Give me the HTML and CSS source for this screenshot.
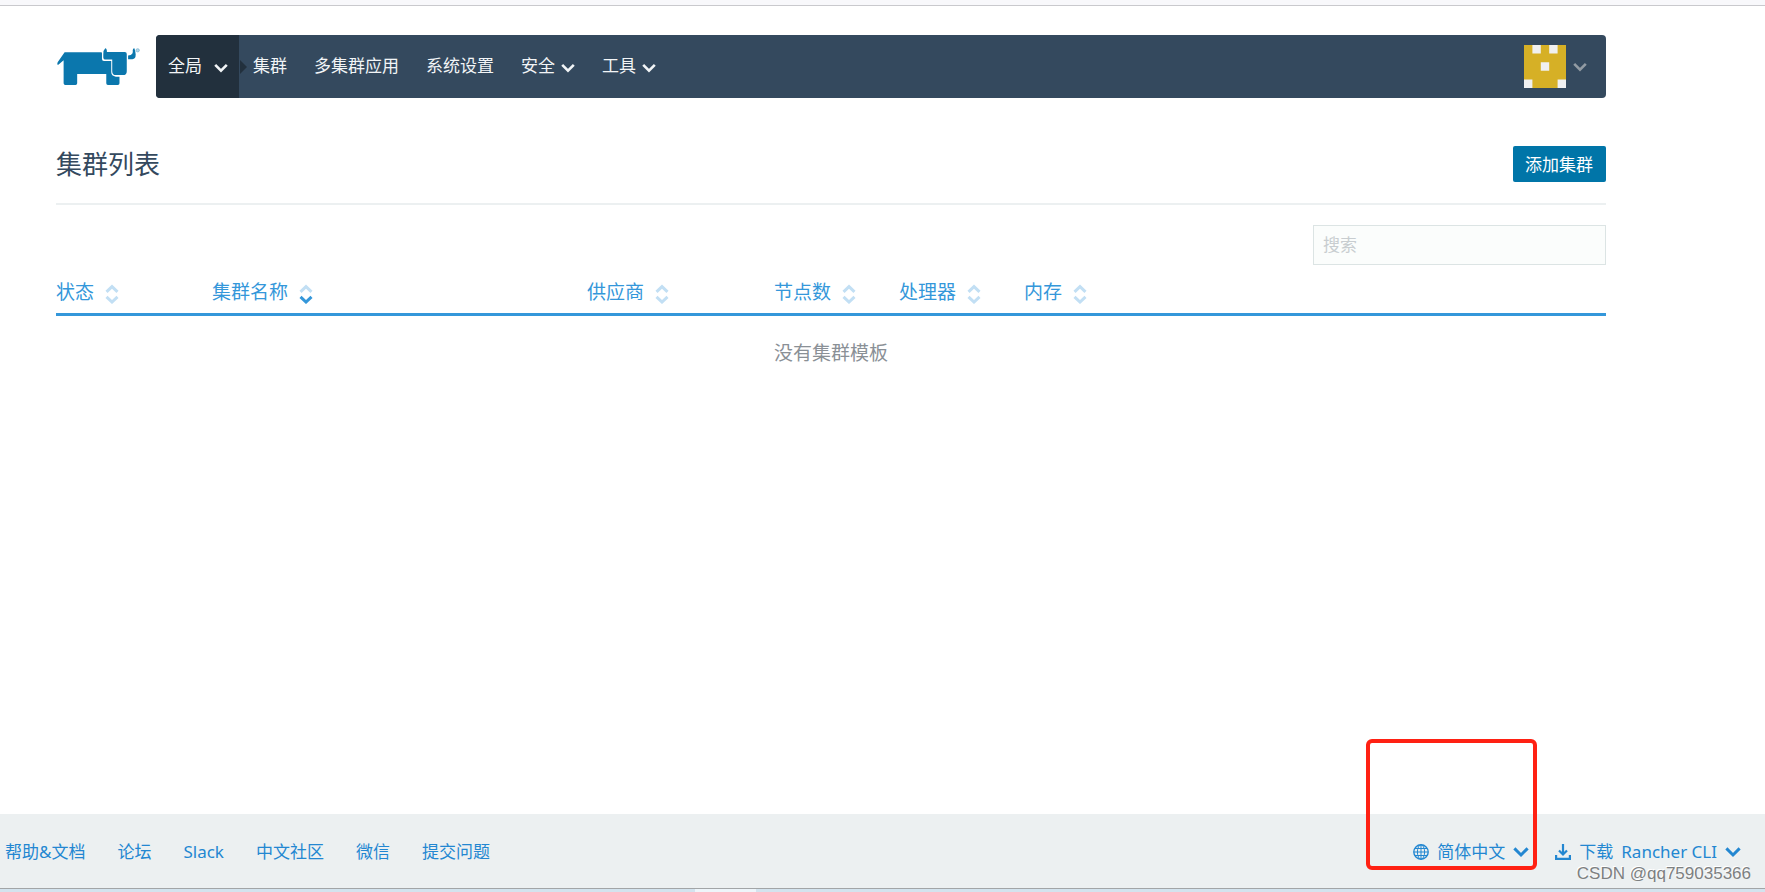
FILE: index.html
```html
<!DOCTYPE html>
<html lang="zh-CN">
<head>
<meta charset="utf-8">
<title>集群列表</title>
<link rel="stylesheet" href="styles.css">
</head>
<body>
<svg class="defs" aria-hidden="true">
  <symbol id="chevron" viewBox="0 0 14 10"><path d="M1.2 1.8 7 7.6l5.800-5.800" fill="none" stroke="currentColor" stroke-width="2.600"/></symbol>
  <symbol id="sort" viewBox="0 0 14 20"><path class="up" d="M1.500 7.800 7 2.600l5.500 5.200"/><path class="down" d="M1.500 12.800 7 18l5.500-5.200"/></symbol>
</svg>
<div class="page">
  <div class="topline"></div>
  <div class="container">
    <header class="header">
      <a class="logo" href="#" aria-label="Rancher">
        <svg viewBox="18 18 255 124" width="85" height="41">
          <path fill="#0b77ad" d="M43 37H154q2 0 2 3v17q0 6 6 6h22v34q0 12 14 14h11v20q0 5-5 5h-30q-5 0-5-5v-28H81v28q0 5-5 5H45q-5 0-5-5V61L25 74q-5 3-4-3l1-4Z"/>
          <path fill="#0b77ad" d="M164 59q-4-1-4-6V43q0-13 6-18 5 1 5 11h54q6 0 6 6v52q0 12-12 12h-20q-12 0-12-12V59Z"/>
          <path fill="#0b77ad" d="M235 58V47q10 0 13-6 2-4 1-10 0-6 5-6 4 10 4 19 0 14-10 14Z"/>
          <circle cx="264" cy="31" r="5" fill="#b5d6e7" stroke="#6eadcc" stroke-width="2"/>
        </svg>
      </a>
      <nav class="nav">
        <button class="nav-item scope" type="button">全局<svg class="chev"><use href="#chevron"/></svg></button>
        <a class="nav-item" href="#">集群</a>
        <a class="nav-item" href="#">多集群应用</a>
        <a class="nav-item" href="#">系统设置</a>
        <button class="nav-item" type="button">安全<svg class="chev"><use href="#chevron"/></svg></button>
        <button class="nav-item" type="button">工具<svg class="chev"><use href="#chevron"/></svg></button>
        <button class="user" type="button" aria-label="用户">
          <svg class="avatar" viewBox="0 0 5 5" preserveAspectRatio="none"><path fill="#d6b026" d="M0 0h5v5H0z"/><path fill="#f0f0f0" d="M1 0h1v1H1zM3 0h1v1H3zM2 2h1v1H2zM0 4h1v1H0zM4 4h1v1H4z"/></svg>
          <svg class="chev"><use href="#chevron"/></svg>
        </button>
      </nav>
    </header>
    <main>
      <div class="title-row">
        <h1>集群列表</h1>
        <button class="primary" type="button">添加集群</button>
      </div>
      <div class="search-row"><input type="search" placeholder="搜索" aria-label="搜索"></div>
      <table class="clusters">
        <colgroup><col class="c-state"><col class="c-name"><col class="c-provider"><col class="c-nodes"><col class="c-cpu"><col></colgroup>
        <thead>
          <tr>
            <th><button type="button">状态<svg class="sort"><use href="#sort"/></svg></button></th>
            <th><button type="button">集群名称<svg class="sort sorted"><use href="#sort"/></svg></button></th>
            <th><button type="button">供应商<svg class="sort"><use href="#sort"/></svg></button></th>
            <th><button type="button">节点数<svg class="sort"><use href="#sort"/></svg></button></th>
            <th><button type="button">处理器<svg class="sort"><use href="#sort"/></svg></button></th>
            <th><button type="button">内存<svg class="sort"><use href="#sort"/></svg></button></th>
          </tr>
        </thead>
        <tbody><tr><td colspan="6">没有集群模板</td></tr></tbody>
      </table>
    </main>
  </div>
  <footer class="footer">
    <div class="links">
      <a href="#">帮助&amp;文档</a>
      <a href="#">论坛</a>
      <a href="#">Slack</a>
      <a href="#">中文社区</a>
      <a href="#">微信</a>
      <a href="#">提交问题</a>
    </div>
    <div class="actions">
      <button type="button">
        <svg class="icon" viewBox="0 0 16 16" fill="none" stroke="currentColor"><circle cx="8" cy="8" r="7.200" stroke-width="1.400"/><ellipse cx="8" cy="8" rx="3.600" ry="7.200"/><path d="M8 1v14M1 8h14M2 4.500h12M2 11.500h12"/></svg>
        <span>简体中文</span>
        <svg class="chev"><use href="#chevron"/></svg>
      </button>
      <button type="button">
        <svg class="icon" viewBox="0 0 16 16" fill="none" stroke="currentColor" stroke-width="2.200"><path d="M8 0v10M4 6.500 8 10.500l4-4M1.100 11v3.900h13.800V11"/></svg>
        <span>下载</span>
        <span>Rancher CLI</span>
        <svg class="chev"><use href="#chevron"/></svg>
      </button>
    </div>
    <div class="highlight"></div>
    <div class="watermark">CSDN @qq759035366</div>
  </footer>
  <div class="taskbar"><span></span></div>
</div>
</body>
</html>
```
FILE: styles.css
```css
* { box-sizing: border-box; }
body {
  margin: 0;
  background: #fff;
  color: #34495e;
  font: 17px/24px "Noto Sans", "Noto Sans CJK SC", sans-serif;
}
button, input { font: inherit; color: inherit; }
button { border: 0; padding: 0; background: none; cursor: pointer; }
a { color: inherit; text-decoration: none; }
svg { display: block; flex: none; }
.defs { position: absolute; width: 0; height: 0; }
.page { min-height: 100vh; display: flex; flex-direction: column; }
.topline { height: 6px; background: #f8f8fb; border-bottom: 1px solid #c9c9cd; }
.container { flex: 1; padding: 29px 159px 0 56px; }

.header { display: flex; align-items: flex-start; }
.logo { width: 100px; padding-top: 11px; }
.nav {
  flex: 1;
  height: 63px;
  display: flex;
  background: #34495e;
  color: #f2f5f7;
  border-radius: 4px;
}
.nav-item { display: flex; align-items: center; padding: 0 14px 2px 13px; }
.chev { width: 14px; height: 10px; margin-left: 6px; margin-top: 4px; }
.scope {
  position: relative;
  width: 83px;
  padding: 0 11px 2px 12px;
  justify-content: space-between;
  background: #22303d;
  border-radius: 4px 0 0 4px;
}
.scope::after {
  content: "";
  position: absolute;
  left: 100%;
  top: 25px;
  border: 7px solid transparent;
  border-left-color: #22303d;
  border-right: 0;
  margin-left: 1px;
}
.scope + .nav-item { padding-left: 14px; }
.user { display: flex; align-items: center; margin-left: auto; padding-right: 19px; color: #929ba3; }
.user .chev { margin: 0 0 0 7px; }
.avatar { width: 42px; height: 43px; }

.title-row {
  display: flex;
  align-items: center;
  justify-content: space-between;
  margin-top: 48px;
  padding-bottom: 21px;
  border-bottom: 2px solid #ecf0f1;
}
h1 { margin: 0; font-size: 26px; line-height: 36px; font-weight: 400; }
.primary { height: 36px; padding: 2px 13px 0 12px; background: #0075a8; color: #fff; border-radius: 2px; }
.search-row { display: flex; justify-content: flex-end; margin-top: 20px; }
.search-row input {
  width: 293px;
  height: 40px;
  padding: 0 9px 2px;
  border: 1px solid #dce4e4;
  border-radius: 0;
  background: #fbfdfc;
  appearance: none;
}
.search-row input::placeholder { color: #c8cdd0; opacity: 1; }

.clusters { width: 100%; margin-top: 11px; border-collapse: collapse; table-layout: fixed; font-size: 19px; }
.c-state { width: 156px; }
.c-name { width: 375px; }
.c-provider { width: 187px; }
.c-nodes, .c-cpu { width: 125px; }
th { height: 38px; padding: 0 0 4px; border-bottom: 3px solid #3497da; text-align: left; font-weight: 400; color: #3497da; }
th button { display: flex; align-items: center; gap: 11px; line-height: 28px; }
.sort { width: 14px; height: 20px; margin-top: 4px; fill: none; stroke: #c2dff4; stroke-width: 3px; }
.sorted { --down: #3497da; }
.down { stroke: var(--down, #c2dff4); }
td { padding: 23px 0; text-align: center; line-height: 28px; color: #8a9096; }

.footer {
  position: relative;
  display: flex;
  justify-content: space-between;
  align-items: center;
  height: 74px;
  padding: 2px 24px 0 5px;
  background: #ecf0f1;
  color: #2387d1;
}
.links { display: flex; gap: 32px; }
.actions { display: flex; gap: 26px; }
.actions button { display: flex; align-items: center; gap: 8px; }
.actions .chev { width: 16px; height: 12px; margin: 0; }
.icon { width: 16px; height: 16px; }
.highlight {
  position: absolute;
  right: 228px;
  bottom: 18px;
  width: 171px;
  height: 131px;
  border: 4px solid #ff2113;
  border-radius: 6px;
}
.watermark {
  position: absolute;
  right: 14px;
  bottom: 2px;
  font: 17px/24px "Liberation Sans", Arial, sans-serif;
  color: #7d8081;
  text-shadow: -1px -1px #fff;
}
.taskbar { height: 4px; border-top: 1px solid #a2a5a7; background: #d3e3ee; }
.taskbar span { display: block; width: 61px; height: 3px; margin-left: 695px; background: #eef5fa; }
```
